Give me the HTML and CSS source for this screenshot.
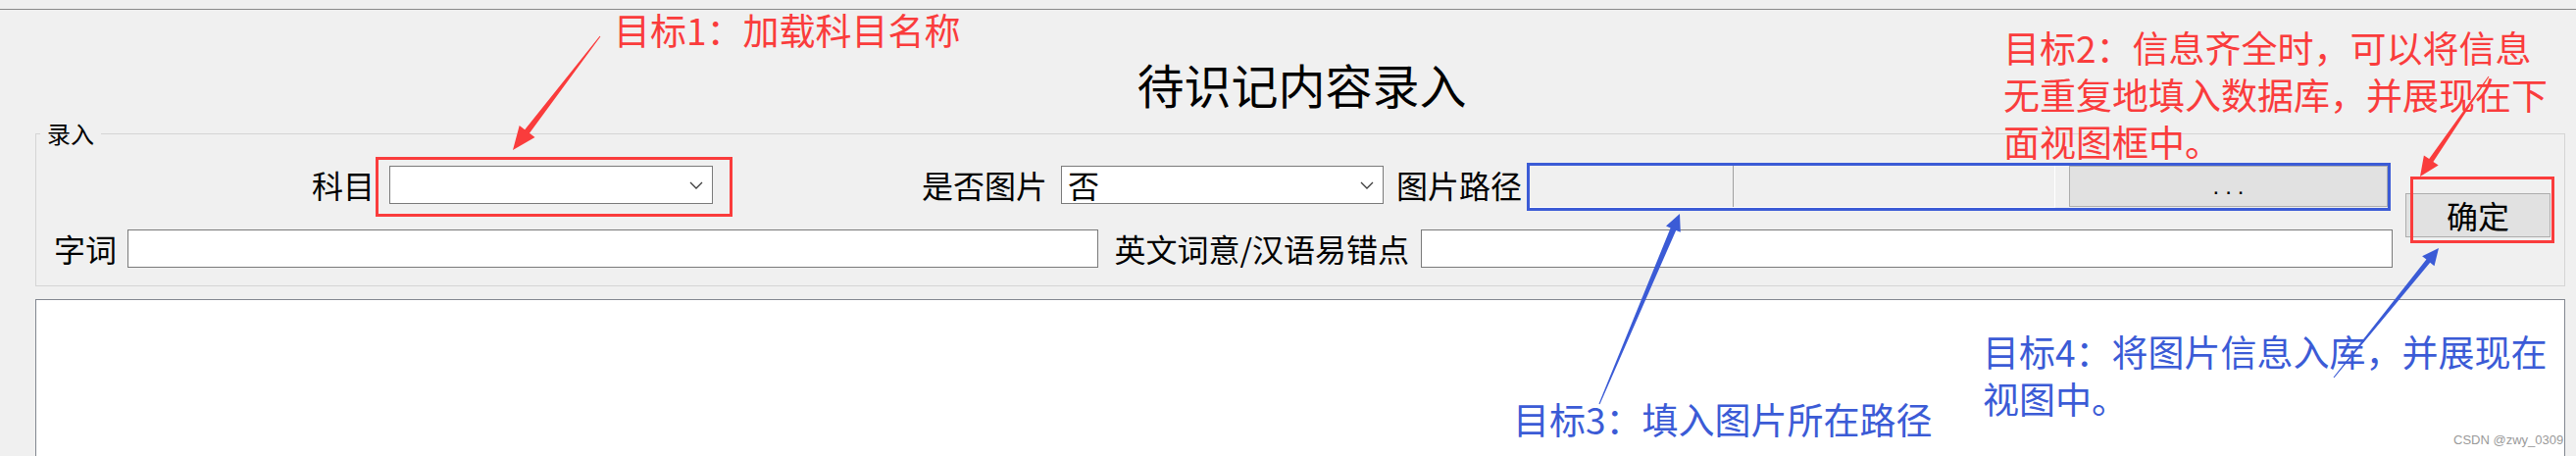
FILE: index.html
```html
<!DOCTYPE html>
<html lang="zh-CN">
<head>
<meta charset="utf-8">
<title>待识记内容录入</title>
<link rel="stylesheet" href="styles.css">
</head>
<body>
<div class="page">
  <div class="topbar"></div>
  <h1 class="title">待识记内容录入</h1>

  <fieldset class="group">
    <legend class="group-legend">录入</legend>
    <div class="group-body">
      <div class="fields">
        <div class="row row1">
          <span class="lbl l-subject">科目</span>
          <div class="combo combo-subject mark-red">
            <span class="combo-text"></span>
            <svg class="chev" width="14" height="8" viewBox="0 0 14 8"><polyline points="1,1 7,7 13,1"/></svg>
          </div>
          <span class="lbl l-haspic">是否图片</span>
          <div class="combo combo-haspic">
            <span class="combo-text">否</span>
            <svg class="chev" width="14" height="8" viewBox="0 0 14 8"><polyline points="1,1 7,7 13,1"/></svg>
          </div>
          <span class="lbl l-path">图片路径</span>
          <div class="pathwrap">
            <div class="pathbox"><div class="pathseg"></div></div>
            <button class="btn btn-browse" type="button">...</button>
          </div>
        </div>
        <div class="row row2">
          <span class="lbl l-word">字词</span>
          <div class="textbox tb-word"></div>
          <span class="lbl l-meaning">英文词意/汉语易错点</span>
          <div class="textbox tb-meaning"></div>
        </div>
      </div>
      <div class="okcol">
        <button class="btn btn-ok mark-red-ok" type="button">确定</button>
      </div>
    </div>
  </fieldset>

  <div class="listview"></div>

  <div class="note note-red note-1">目标1：加载科目名称</div>
  <div class="note note-red note-2">目标2：信息齐全时，可以将信息<br>无重复地填入数据库，并展现在下<br>面视图框中。</div>
  <div class="note note-blue note-3">目标3：填入图片所在路径</div>
  <div class="note note-blue note-4">目标4：将图片信息入库，并展现在<br>视图中。</div>
  <div class="watermark">CSDN @zwy_0309</div>

  <svg class="arrows" width="2627" height="465" viewBox="0 0 2627 465">
    <polygon class="arrow-red" points="612.4,37.3 540,135.8 545.5,140.1 523,153 529.7,127.9 535.2,132.2 611.6,36.7"/>
    <polygon class="arrow-red" points="2538.4,78.3 2481.4,164.9 2486.7,168.6 2468,180 2471.9,158.4 2477.2,162.1 2537.6,77.7"/>
    <polygon class="arrow-blue" points="1631.5,412.2 1709.2,234.9 1713.8,236.8 1713,218 1699,230.6 1703.6,232.5 1630.5,411.8"/>
    <polygon class="arrow-blue" points="2380.4,385.3 2478.2,267.8 2482.5,271.2 2487,253 2470.1,261.2 2474.4,264.6 2379.6,384.7"/>
  </svg>
</div>
</body>
</html>
```

FILE: styles.css
```css
* {
  box-sizing: border-box;
}

html, body {
  margin: 0;
  padding: 0;
  background: #f0f0f0;
}

body {
  font-family: "Noto Sans CJK SC", "Noto Sans", sans-serif;
  color: #000;
}

.page {
  position: relative;
  width: 2627px;
  height: 465px;
  overflow: hidden;
  background: #f0f0f0;
}

.topbar {
  height: 10px;
  border-bottom: 1px solid #8a8a8a;
}

.title {
  margin: 0 0 15px 0;
  padding: 51px 0 0 28px;
  height: 99px;
  font-size: 48px;
  line-height: 48px;
  font-weight: normal;
  text-align: center;
}

/* group box */
.group {
  margin: 0 11px 0 36px;
  padding: 0;
  min-width: 0;
  border: 1px solid #d5d5d5;
}

.group-legend {
  margin-left: 4px;
  padding: 0 7px;
  font-size: 24px;
  line-height: 24px;
}

.group-body {
  display: flex;
  padding: 21px 0 18px 0;
}

.fields {
  width: 2403px;
  display: flex;
  flex-direction: column;
  gap: 26px;
}

.row {
  display: flex;
  align-items: center;
  height: 39px;
}

.lbl {
  font-size: 32px;
  line-height: 39px;
  text-align: right;
  white-space: nowrap;
  flex: none;
}

.l-subject { margin-left: 280px; width: 65px; }
.l-haspic  { margin-left: 210px; width: 131px; }
.l-path    { margin-left: 10px;  width: 131px; }
.l-word    { margin-left: 17px;  width: 65px; }
.l-meaning { margin-left: 10px;  width: 307px; }

.combo {
  position: relative;
  flex: none;
  height: 39px;
  background: #fff;
  border: 1px solid #7a7a7a;
  display: flex;
  align-items: center;
  justify-content: space-between;
  padding: 0 9px 0 6px;
}

.combo-subject { margin-left: 15px; width: 330px; }
.combo-haspic  { margin-left: 14px; width: 329px; }

.combo-text {
  font-size: 32px;
  line-height: 37px;
}

.chev polyline {
  fill: none;
  stroke: #3c3c3c;
  stroke-width: 1.3;
}

.textbox {
  flex: none;
  height: 39px;
  background: #fff;
  border: 1px solid #7a7a7a;
}

.tb-word    { margin-left: 11px; width: 990px; }
.tb-meaning { margin-left: 12px; width: 991px; }

/* picture path with browse button */
.pathwrap {
  flex: none;
  margin-left: 8px;
  margin-top: 4px;
  width: 875px;
  height: 43px;
  display: flex;
  align-items: flex-start;
  gap: 14px;
  outline: 3px solid #3b5bd6;
}

.pathbox {
  width: 536px;
  height: 43px;
  background: #f0f0f0;
  border-right: 1px solid #ffffff;
  border-bottom: 1px solid #ffffff;
}

.pathseg {
  width: 208px;
  height: 100%;
  border-right: 1px solid #a0a0a0;
}

.btn {
  margin: 0;
  padding: 0;
  background: #e1e1e1;
  border: 1px solid #adadad;
  border-radius: 0;
  color: #000;
  text-align: center;
}

.btn-browse {
  width: 325px;
  height: 42px;
  font-family: "Liberation Sans", sans-serif;
  font-size: 24px;
  line-height: 40px;
  letter-spacing: 6px;
  padding-left: 6px;
}

.okcol {
  margin-left: 13px;
}

.btn-ok {
  position: relative;
  margin-top: 28px;
  width: 148px;
  height: 45px;
  font-family: "Noto Sans CJK SC", sans-serif;
  font-size: 32px;
  line-height: 43px;
}

/* red annotation frames */
.mark-red::after {
  content: "";
  position: absolute;
  left: -15px;
  top: -10px;
  right: -21px;
  bottom: -14px;
  border: 3px solid #fa3c3c;
  pointer-events: none;
}

.mark-red-ok::after {
  content: "";
  position: absolute;
  left: 4px;
  top: -18px;
  right: -5px;
  bottom: -7px;
  border: 3px solid #fa3c3c;
  pointer-events: none;
}

/* list view */
.listview {
  margin: 13px 11px 0 36px;
  height: 200px;
  background: #fff;
  border: 1px solid #828790;
}

/* annotations */
.note {
  position: absolute;
  font-family: "Noto Sans CJK SC", sans-serif;
  font-size: 37px;
  white-space: nowrap;
}

.note-red { color: #fa3c3c; }
.note-blue { color: #3b5bd6; }

.note-1 { left: 626px; top: 12px; line-height: 37px; }
.note-2 { left: 2043px; top: 24px; line-height: 48px; }
.note-3 { left: 1543px; top: 409px; line-height: 37px; }
.note-4 { left: 2022px; top: 334px; line-height: 48px; }

.watermark {
  position: absolute;
  left: 2502px;
  top: 442px;
  font-family: "Liberation Sans", sans-serif;
  font-size: 13px;
  line-height: 13px;
  color: #9a9a9a;
  white-space: nowrap;
}

.arrows {
  position: absolute;
  left: 0;
  top: 0;
  pointer-events: none;
}

.arrow-red { fill: #fa3c3c; }
.arrow-blue { fill: #3b5bd6; }
```
